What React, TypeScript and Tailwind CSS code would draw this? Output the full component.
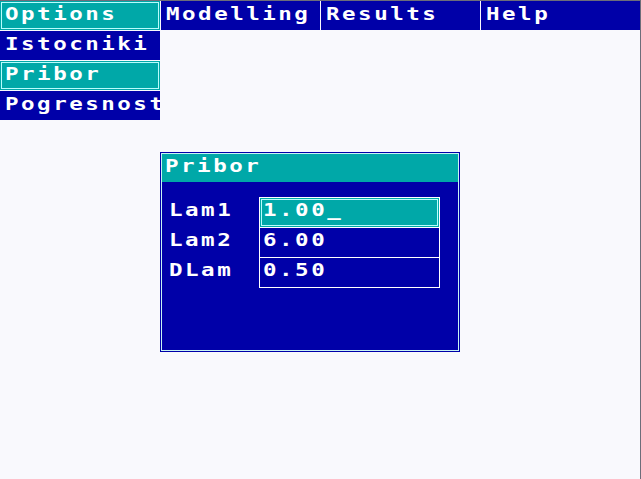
import React from 'react';

const font = { fontFamily: '"DejaVu Sans Mono", "Liberation Mono", monospace' };

const menu = ['Options', 'Modelling', 'Results', 'Help'];
const subMenu = ['Istocniki', 'Pribor', 'Pogresnost'];

const fields = [
  { label: 'Lam1', value: '1.00_', active: true },
  { label: 'Lam2', value: '6.00', active: false },
  { label: 'DLam', value: '0.50', active: false },
];

const txt = 'inline-block origin-left scale-x-[1.25] text-[18px] font-bold tracking-[2px] leading-[22px] text-white whitespace-nowrap';
const cell = 'h-[29px] pl-[5px] pt-[2px] overflow-hidden';
const activeCell = 'bg-[#00a8a8] shadow-[inset_0_0_0_1px_#00a8a8,inset_0_0_0_2px_#b8fcfc]';

function T({ children }: { children: React.ReactNode }) {
  return <span className={txt}>{children}</span>;
}

export default function App() {
  return (
    <div
      className="relative w-[641px] h-[479px] bg-[#f9f9fd] border-t border-r border-[#6d6d7a] overflow-hidden"
      style={font}
    >
      {/* menu bar */}
      <div className="flex gap-px">
        {menu.map((m, i) => (
          <div key={m} className={`${cell} ${i === 0 ? 'w-[160px] ' + activeCell : 'w-[159px] bg-[#0000a8]'}`}>
            <T>{m}</T>
          </div>
        ))}
      </div>

      {/* dropdown */}
      <div className="flex flex-col gap-px mt-px w-[160px]">
        {subMenu.map((s) => (
          <div key={s} className={`${cell} ${s === 'Pribor' ? activeCell : 'bg-[#0000a8]'}`}>
            <T>{s}</T>
          </div>
        ))}
      </div>

      {/* dialog */}
      <div className="absolute left-[160px] top-[151px] w-[300px] h-[200px] bg-[#0000a8] p-px">
        <div className="h-full border border-[#c8f4f4] flex flex-col">
          <div className="h-[28px] bg-[#00a8a8] pl-[3px] pt-[1px] overflow-hidden">
            <T>Pribor</T>
          </div>
          <div className="flex pt-[15px] pl-[7px]">
            <div className="w-[90px] flex flex-col">
              {fields.map((f) => (
                <div key={f.label} className="h-[30px] pt-[2px]">
                  <T>{f.label}</T>
                </div>
              ))}
            </div>
            <div className="w-[181px] border border-white">
              {fields.map((f, i) => (
                <div
                  key={f.label}
                  className={`h-[29px] pl-[3px] pt-[1px] overflow-hidden ${
                    i > 0 ? 'border-t border-white h-[30px]' : ''
                  } ${f.active ? 'bg-[#00a8a8] shadow-[inset_0_0_0_1px_#00a8a8,inset_0_0_0_2px_#b8fcfc]' : ''}`}
                >
                  <T>{f.value}</T>
                </div>
              ))}
            </div>
          </div>
        </div>
      </div>
    </div>
  );
}
